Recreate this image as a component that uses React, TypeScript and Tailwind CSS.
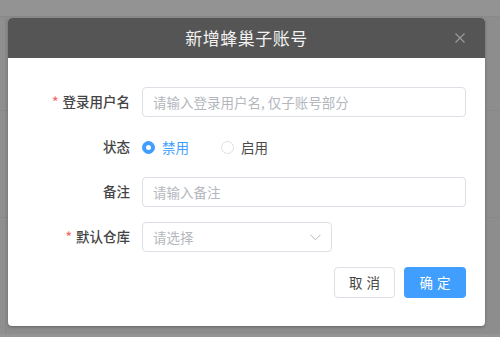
import React, { useState } from 'react';

const FONT = "font-['Noto_Sans_CJK_SC','Noto_Sans',sans-serif]";

function Radio({ checked, label, onClick }: { checked: boolean; label: string; onClick: () => void }) {
  return (
    <label className="flex items-center cursor-pointer" onClick={onClick}>
      <span
        className={`w-[13px] h-[13px] rounded-full border flex items-center justify-center ${
          checked ? 'bg-[#409eff] border-[#409eff]' : 'bg-white border-[#dcdfe6]'
        }`}
      >
        {checked && <span className="w-[5px] h-[5px] rounded-full bg-white" />}
      </span>
      <span className={`ml-[7px] text-[13.5px] ${checked ? 'text-[#409eff]' : 'text-[#4a4a4a]'}`}>{label}</span>
    </label>
  );
}

function FormRow({ label, required, children }: { label: string; required?: boolean; children: React.ReactNode }) {
  return (
    <div className="flex items-center h-[30px]">
      <div className="w-[114px] pr-[12px] text-right text-[13.5px] font-medium text-[#444] leading-none">
        {required && <span className="text-[#f56c6c] mr-[4px]">*</span>}
        {label}
      </div>
      <div className="flex-1 flex items-center h-full">{children}</div>
    </div>
  );
}

export default function App() {
  const [status, setStatus] = useState<'off' | 'on'>('off');

  return (
    <div className={`relative w-[500px] h-[337px] bg-[#8d8d8d] overflow-hidden ${FONT}`}>
      {/* dimmed page behind the overlay */}
      <div className="h-[17px] bg-[#939393] border-b border-[#898989]" />
      <div className="absolute left-0 top-[17px] bottom-0 w-[6px] border-r border-[#878787] bg-[#8f8f8f]" />
      <div className="absolute left-0 right-0 top-[110px] h-px bg-[#888]" />
      <div className="absolute left-0 right-0 top-[217px] h-px bg-[#888]" />
      <div className="absolute left-0 right-0 top-[334px] h-[3px] bg-[#959595]" />

      {/* dialog */}
      <div className="absolute left-[8px] top-[18px] w-[477px] rounded-[4px] bg-white shadow-[0_1px_3px_rgba(0,0,0,0.3)] overflow-hidden">
        <div className="relative h-[40px] bg-[#555555] flex items-center justify-center">
          <span className="text-[17px] text-[#f2f2f2] tracking-[0.5px]">新增蜂巢子账号</span>
          <button className="absolute right-[20px] top-[15px] text-[#9a9a9a]">
            <svg width="10" height="10" viewBox="0 0 10 10" fill="none" stroke="currentColor" strokeWidth="1.2">
              <path d="M0.5 0.5L9.5 9.5M9.5 0.5L0.5 9.5" />
            </svg>
          </button>
        </div>

        <div className="pt-[29px] pb-[28px] pl-[20px] pr-[19px] flex flex-col gap-[15px]">
          <FormRow label="登录用户名" required>
            <input
              className="w-full h-full rounded-[4px] border border-[#dcdfe6] px-[10px] text-[13.5px] text-[#606266] placeholder:text-[#b4b7bd] outline-none"
              placeholder="请输入登录用户名, 仅子账号部分"
            />
          </FormRow>
          <FormRow label="状态">
            <div className="flex items-center gap-[32px]">
              <Radio checked={status === 'off'} label="禁用" onClick={() => setStatus('off')} />
              <Radio checked={status === 'on'} label="启用" onClick={() => setStatus('on')} />
            </div>
          </FormRow>
          <FormRow label="备注">
            <input
              className="w-full h-full rounded-[4px] border border-[#dcdfe6] px-[10px] text-[13.5px] text-[#606266] placeholder:text-[#b4b7bd] outline-none"
              placeholder="请输入备注"
            />
          </FormRow>
          <FormRow label="默认仓库" required>
            <div className="w-[190px] h-full rounded-[4px] border border-[#dcdfe6] px-[10px] flex items-center justify-between">
              <span className="text-[13.5px] text-[#b4b7bd]">请选择</span>
              <svg width="11" height="7" viewBox="0 0 11 7" fill="none" stroke="#b4b7bd" strokeWidth="1">
                <path d="M0.5 0.8L5.5 5.8L10.5 0.8" />
              </svg>
            </div>
          </FormRow>
          <div className="flex justify-end gap-[9px] h-[31px]">
            <button className="w-[61px] h-full rounded-[4px] border border-[#dcdfe6] bg-white text-[13.5px] text-[#444] tracking-[4px] pl-[4px]">
              取消
            </button>
            <button className="w-[62px] h-full rounded-[4px] bg-[#409eff] text-[13.5px] text-white tracking-[4px] pl-[4px]">
              确定
            </button>
          </div>
        </div>
      </div>
    </div>
  );
}
